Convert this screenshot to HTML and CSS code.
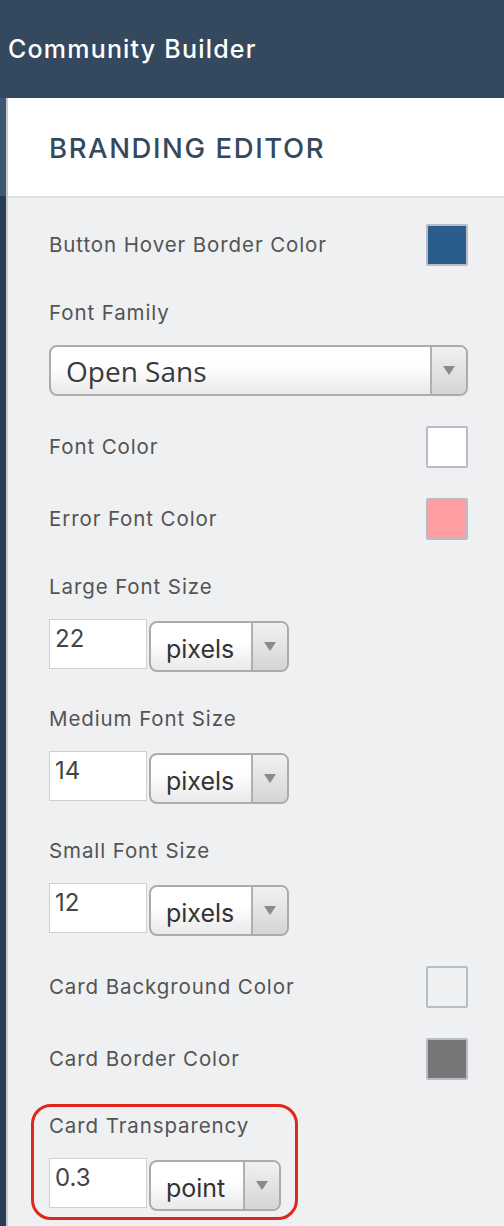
FILE: index.html
```html
<!DOCTYPE html>
<html>
<head>
<meta charset="utf-8">
<link rel="stylesheet" href="styles.css">
</head>
<body>
<header class="topbar"><span class="app-title">Community Builder</span></header>
<div class="main">
  <div class="rail"><div class="rail-top"></div><div class="rail-bottom"></div></div>
  <section class="panel">
    <div class="panel-head"><h1 class="panel-title">BRANDING EDITOR</h1></div>
    <div class="panel-body">
      <div class="color-row">
        <span class="label">Button Hover Border Color</span>
        <span class="swatch swatch-blue"></span>
      </div>
      <div class="field">
        <div class="label label-block">Font Family</div>
        <div class="select select-wide">
          <span class="select-text select-text-os">Open Sans</span>
          <span class="select-arrow"><span class="tri"></span></span>
        </div>
      </div>
      <div class="color-row">
        <span class="label">Font Color</span>
        <span class="swatch swatch-white"></span>
      </div>
      <div class="color-row">
        <span class="label">Error Font Color</span>
        <span class="swatch swatch-pink"></span>
      </div>
      <div class="field">
        <div class="label label-block">Large Font Size</div>
        <div class="size-row">
          <div class="num-input">22</div>
          <div class="select select-unit">
            <span class="select-text">pixels</span>
            <span class="select-arrow"><span class="tri"></span></span>
          </div>
        </div>
      </div>
      <div class="field">
        <div class="label label-block">Medium Font Size</div>
        <div class="size-row">
          <div class="num-input">14</div>
          <div class="select select-unit">
            <span class="select-text">pixels</span>
            <span class="select-arrow"><span class="tri"></span></span>
          </div>
        </div>
      </div>
      <div class="field">
        <div class="label label-block">Small Font Size</div>
        <div class="size-row">
          <div class="num-input">12</div>
          <div class="select select-unit">
            <span class="select-text">pixels</span>
            <span class="select-arrow"><span class="tri"></span></span>
          </div>
        </div>
      </div>
      <div class="color-row">
        <span class="label">Card Background Color</span>
        <span class="swatch swatch-light"></span>
      </div>
      <div class="color-row color-row-last">
        <span class="label">Card Border Color</span>
        <span class="swatch swatch-gray"></span>
      </div>
      <div class="highlight">
        <div class="label label-block">Card Transparency</div>
        <div class="size-row">
          <div class="num-input">0.3</div>
          <div class="select select-point">
            <span class="select-text">point</span>
            <span class="select-arrow"><span class="tri"></span></span>
          </div>
        </div>
      </div>
    </div>
  </section>
</div>
</body>
</html>
```

FILE: styles.css
```css
* { box-sizing: border-box; }
html, body { margin: 0; padding: 0; }
body {
  background: #eff0f2;
  font-family: "Inter", "Lato", "Liberation Sans", sans-serif;
  width: 504px;
  height: 1226px;
  overflow: hidden;
}
.topbar {
  height: 98px;
  background: #35495e;
  display: flex;
  align-items: center;
  padding-left: 8px;
}
.app-title {
  color: #ffffff;
  font-size: 25px;
  font-weight: 500;
  letter-spacing: 1.2px;
}
.main {
  display: flex;
  min-height: 1128px;
}
.rail {
  width: 8px;
  display: flex;
  flex-direction: column;
  border-right: 2px solid #c7cbd1;
}
.rail-top { height: 98px; background: #3f5872; }
.rail-bottom { flex: 1; background: #283d53; }
.panel {
  flex: 1;
}
.panel-head {
  height: 100px;
  background: #ffffff;
  border-bottom: 2px solid #dcdee2;
  display: flex;
  align-items: center;
  padding-left: 41px;
}
.panel-title {
  margin: 0;
  color: #34495e;
  font-size: 27.5px;
  font-weight: 500;
  letter-spacing: 1.6px;
  padding-top: 2px;
}
.panel-body {
  padding: 26px 36px 0 41px;
}
.label {
  color: #545454;
  font-size: 20.5px;
  line-height: 34px;
  letter-spacing: 0.9px;
}
.color-row {
  height: 42px;
  margin-bottom: 30px;
  display: flex;
  align-items: center;
  justify-content: space-between;
}
.color-row-last { margin-bottom: 24px; }
.swatch {
  width: 42px;
  height: 42px;
  border: 2px solid #b9bcc7;
  border-radius: 2px;
}
.swatch-blue { background: #2a5d8b; }
.swatch-white { background: #ffffff; }
.swatch-pink { background: #ff9ea2; }
.swatch-light { background: #eff0f2; }
.swatch-gray { background: #777777; }
.field { margin-bottom: 30px; }
.label-block { height: 34px; margin-bottom: 15px; }
.select {
  height: 51px;
  display: flex;
  border: 2px solid #ababab;
  border-radius: 8px;
  background: linear-gradient(#ffffff 40%, #e9e9e9);
  overflow: hidden;
}
.select-text {
  flex: 1;
  display: flex;
  align-items: center;
  color: #333333;
  font-size: 25px;
  padding-left: 15px;
  padding-top: 4px;
}
.select-text-os {
  font-family: "Open Sans", sans-serif;
  font-size: 28px;
  padding-left: 15px;
  padding-top: 0;
  color: #3a3a3a;
}
.select-arrow {
  width: 36px;
  border-left: 2px solid #b0b0b0;
  background: linear-gradient(#f1f1f1, #d5d5d5);
  display: flex;
  align-items: center;
  justify-content: center;
}
.tri {
  width: 0;
  height: 0;
  border-left: 6px solid transparent;
  border-right: 6px solid transparent;
  border-top: 9px solid #8a8a8a;
}
.select-wide { width: 419px; }
.size-row {
  display: flex;
  align-items: flex-start;
}
.label-block + .size-row { margin-top: 1px; }
.num-input {
  width: 98px;
  height: 50px;
  background: #ffffff;
  border: 1px solid #d0d0d0;
  color: #444444;
  font-size: 24px;
  padding: 4px 0 0 5px;
  margin-right: 2px;
}
.select-unit { width: 140px; margin-top: 2px; }
.select-point { width: 132px; margin-top: 2px; }
.highlight {
  width: 267px;
  margin-left: -18px;
  border: 3px solid #e1271c;
  border-radius: 20px;
  padding: 2px 0 6px 15px;
}
```
